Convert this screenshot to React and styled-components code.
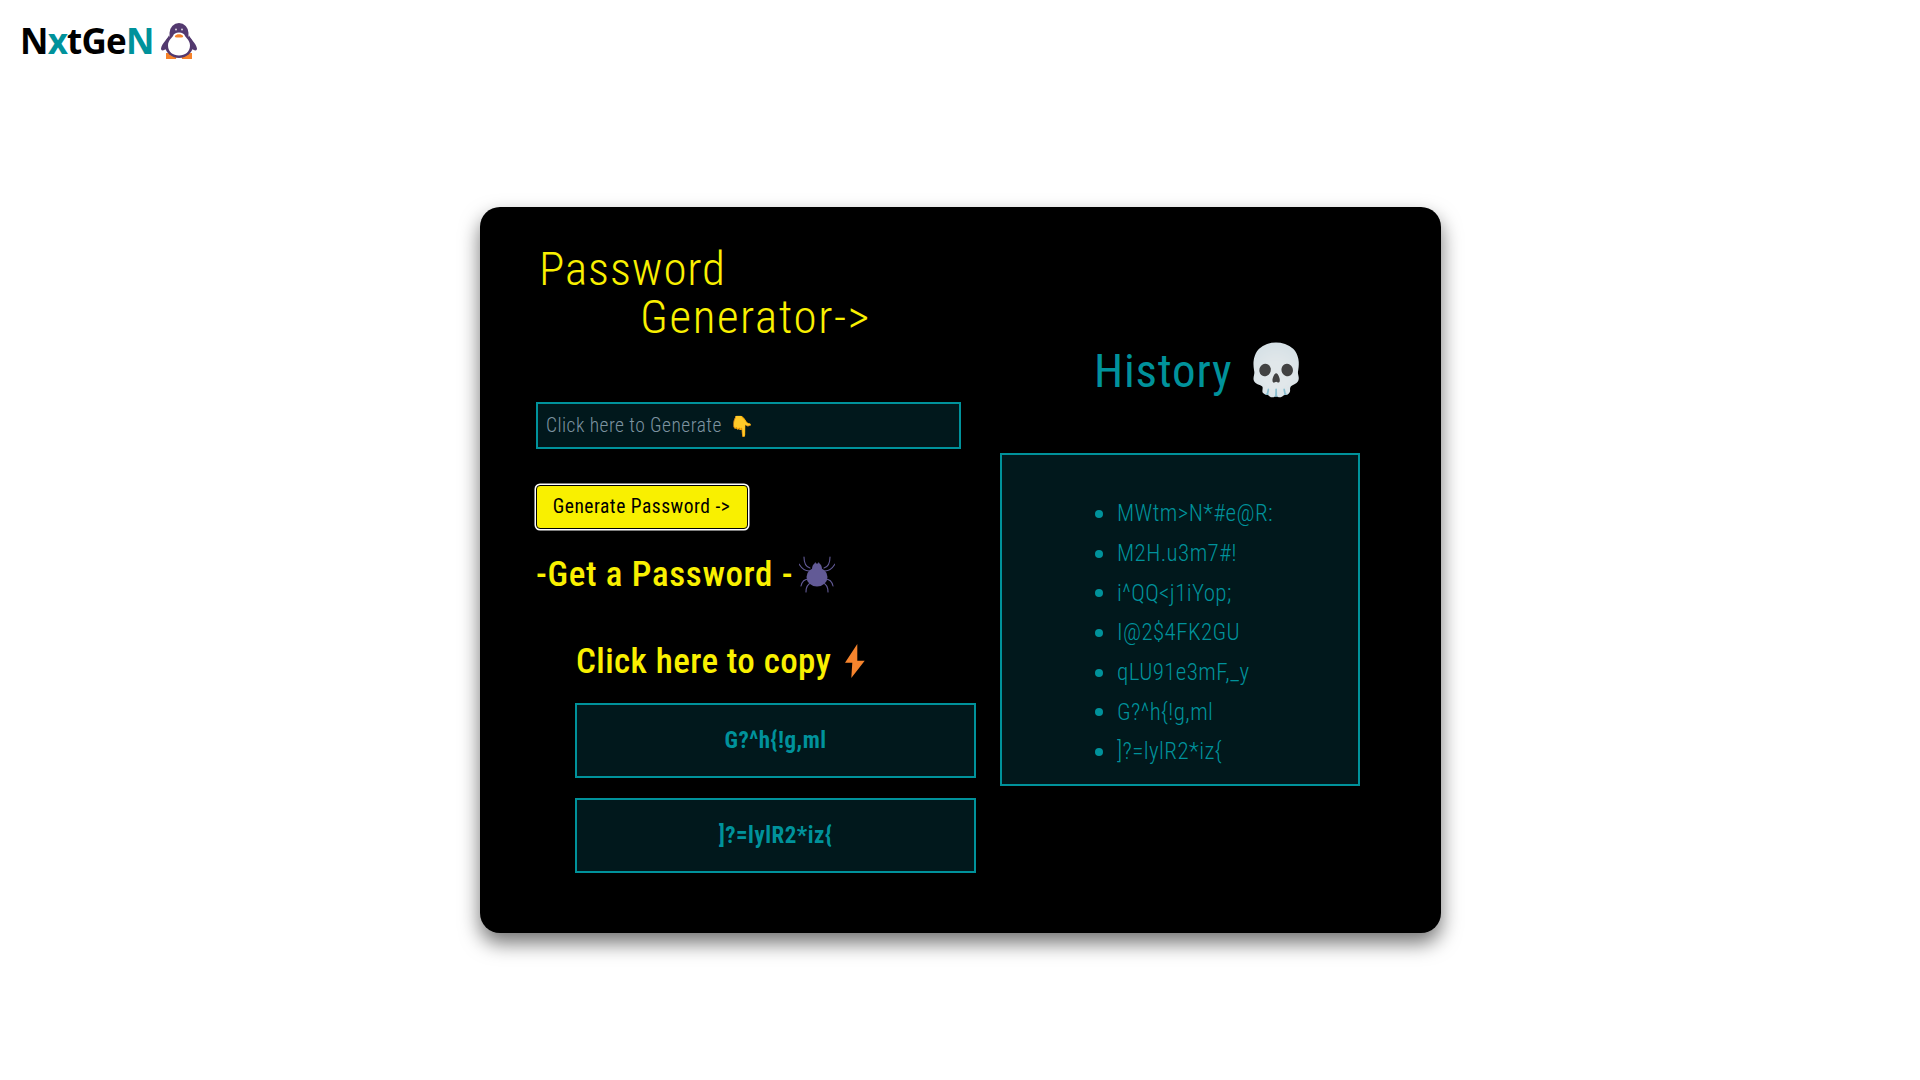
import React from "react";
import styled, { createGlobalStyle } from "styled-components";

const TEAL = "#00929b";
const DARK = "#01181c";
const YELLOW = "#f9f000";
const CONDENSED = `"Roboto Condensed", Roboto, "Liberation Sans", sans-serif`;
const EMOJI = `"Roboto Condensed", "Noto Color Emoji", sans-serif`;

const Global = createGlobalStyle`
  html, body { margin: 0; padding: 0; background: #fff; }
  * { box-sizing: border-box; }
`;

const Page = styled.div`
  display: flex;
  flex-direction: column;
  align-items: flex-start;
  width: 1920px;
  height: 1080px;
  overflow: hidden;
`;

const Header = styled.header`
  display: flex;
  align-items: center;
  gap: 7px;
  height: 82px;
  padding-left: 20px;
`;

const Logo = styled.h1`
  margin: 0;
  font-family: "Open Sans", sans-serif;
  font-size: 35px;
  font-weight: 700;
  line-height: 82px;
  letter-spacing: -0.8px;
  color: #000;
`;

const Accent = styled.span`
  color: ${TEAL};
`;

const Card = styled.main`
  display: grid;
  grid-template-columns: 466px 360px;
  width: 961px;
  height: 726px;
  margin: 125px 0 0 480px;
  padding-left: 54px;
  background: #000;
  border-radius: 20px;
  box-shadow: 0 10px 20px rgba(0, 0, 0, 0.55);
  font-family: ${CONDENSED};
`;

const LeftColumn = styled.section`
  display: flex;
  flex-direction: column;
  align-items: flex-start;
  padding-top: 38px;
`;

const Title = styled.h2`
  margin: 0 0 61px 5px;
  font-size: 47px;
  font-weight: 300;
  line-height: 48px;
  color: ${YELLOW};
`;

const TitleLine = styled.span`
  display: block;
  margin-left: ${(p) => p.$indent || 0}px;
  letter-spacing: ${(p) => p.$spacing}px;
`;

const Field = styled.div`
  display: flex;
  align-items: center;
  gap: 8px;
  width: 425px;
  height: 47px;
  margin-left: 2px;
  padding-left: 8px;
  background: ${DARK};
  border: 2px solid ${TEAL};
`;

const Placeholder = styled.span`
  font-size: 19.5px;
  font-weight: 300;
  letter-spacing: 0.45px;
  color: #7d93a0;
`;

const Hand = styled.span`
  font-family: ${EMOJI};
  font-size: 20px;
  line-height: 1;
`;

const GenerateButton = styled.button`
  width: 212px;
  height: 44px;
  margin: 35.5px 0 0 1.5px;
  padding: 0;
  background: ${YELLOW};
  border: 1px solid #000;
  border-radius: 4px;
  box-shadow: 0 0 0 1.5px #fff;
  font-family: ${CONDENSED};
  font-size: 19.5px;
  font-weight: 400;
  letter-spacing: 0.5px;
  color: #000;
`;

const Status = styled.div`
  display: flex;
  align-items: center;
  gap: 6px;
  height: 50px;
  margin: 20.5px 0 0 2px;
  font-size: 35px;
  font-weight: 500;
  letter-spacing: 0.65px;
  color: ${YELLOW};
`;

const Saved = styled.div`
  display: flex;
  flex-direction: column;
  gap: 20px;
  width: 401px;
  margin: 40px 0 0 41px;
`;

const CopyHeading = styled.div`
  display: flex;
  align-items: center;
  gap: 14px;
  height: 44px;
  margin: 0 0 0 1px;
  font-size: 35px;
  font-weight: 500;
  letter-spacing: 0.4px;
  color: ${YELLOW};
`;

const CopyBox = styled.div`
  display: flex;
  align-items: center;
  justify-content: center;
  height: 75px;
  background: ${DARK};
  border: 2px solid ${TEAL};
  font-size: 23px;
  font-weight: 700;
  letter-spacing: 0.5px;
  color: ${TEAL};
`;

const RightColumn = styled.section`
  display: flex;
  flex-direction: column;
  padding-top: 128px;
`;

const HistoryHeading = styled.h2`
  display: flex;
  align-items: center;
  gap: 13px;
  height: 70px;
  margin: 0 0 48px 94px;
  font-size: 47px;
  font-weight: 400;
  letter-spacing: 0.8px;
  white-space: nowrap;
  color: ${TEAL};
`;

const Skull = styled.span`
  font-family: ${EMOJI};
  font-size: 50px;
  line-height: 1;
`;

const HistoryBox = styled.ul`
  display: flex;
  flex-direction: column;
  width: 360px;
  height: 333px;
  margin: 0;
  padding: 39px 0 0 93px;
  list-style: none;
  background: ${DARK};
  border: 2px solid ${TEAL};
`;

const HistoryItem = styled.li`
  display: flex;
  align-items: center;
  gap: 14px;
  height: 39.7px;
  font-size: 23px;
  font-weight: 300;
  letter-spacing: 0.4px;
  color: ${TEAL};

  &::before {
    content: "";
    width: 8px;
    height: 8px;
    border-radius: 50%;
    background: ${TEAL};
  }
`;

const Penguin = () => (
  <svg width="36" height="36" viewBox="0 0 36 36" aria-hidden="true">
    <path d="M5 30h11l-1 6H5zM20 30h11v6H21z" fill="#f6822a" />
    <path d="M9 10C7 16 1 20 0 25.500 0 28.500 3 27.500 6 25.500zM27 10c2 6 8 10 9 15.500 0 3-3 2-6 0z" fill="#53396f" />
    <ellipse cx="18" cy="10" rx="9.500" ry="10" fill="#53396f" />
    <ellipse cx="18" cy="22.500" rx="14" ry="12.500" fill="#53396f" />
    <path d="M18 9.500c3 0 5.500 1.500 6 3.500.5 1.500 5 4 5 9.500 0 6.500-5 10-11 10s-11-3.500-11-10c0-5.500 4.500-8 5-9.500.5-2 3-3.500 6-3.500z" fill="#fff" />
    <circle cx="15" cy="6.500" r="1" fill="#d8d3df" />
    <circle cx="21" cy="6.500" r="1" fill="#d8d3df" />
    <path d="M14 13c1-2.200 7-2.200 8 0 .6 1.500-1.500 1.600-4 1.600s-4.600-.1-4-1.600z" fill="#f6822a" />
  </svg>
);

const Spider = () => (
  <svg width="36" height="37" viewBox="0 0 36 37" aria-hidden="true">
    <g fill="none" stroke="#625a96" strokeWidth="1.1" strokeLinecap="round">
      <path d="M11 12C7 11 5 7 5 1" />
      <path d="M25 12c4-1 6-5 6-11" />
      <path d="M10 15C6 15 3 13 0 8" />
      <path d="M26 15c4 0 7-2 10-7" />
      <path d="M10 23c-4 0-7 2-8 7" />
      <path d="M26 23c4 0 7 2 8 7" />
      <path d="M12 27c-3 1-5 4-5 9" />
      <path d="M24 27c3 1 5 4 5 9" />
    </g>
    <ellipse cx="18" cy="21" rx="10.500" ry="9.500" fill="#625a96" />
    <path d="M13 13c0-3 1.500-5 2.500-5.500l.8-1.500.7 1.500h2l.7-1.500.8 1.500c1 .5 2.500 2.500 2.500 5.500z" fill="#625a96" />
  </svg>
);

const Bolt = () => (
  <svg width="20" height="34" viewBox="0 0 20 34" aria-hidden="true">
    <polygon points="12.300,0 0,18.700 7.300,18.700 6.300,34 19.700,16.700 12.300,16.700" fill="#f6842d" />
  </svg>
);

const history = [
  "MWtm>N*#e@R:",
  "M2H.u3m7#!",
  "i^QQ<j1iYop;",
  "I@2$4FK2GU",
  "qLU91e3mF,_y",
  "G?^h{!g,ml",
  "]?=lylR2*iz{",
];

export default function App() {
  return (
    <Page>
      <Global />
      <Header>
        <Logo>
          N<Accent>x</Accent>tGe<Accent>N</Accent>
        </Logo>
        <Penguin />
      </Header>
      <Card>
        <LeftColumn>
          <Title>
            <TitleLine $spacing={0.9}>Password</TitleLine>
            <TitleLine $indent={101} $spacing={1.6}>Generator-&gt;</TitleLine>
          </Title>
          <Field>
            <Placeholder>Click here to Generate</Placeholder>
            <Hand>👇</Hand>
          </Field>
          <GenerateButton>Generate Password -&gt;</GenerateButton>
          <Status>
            -Get a Password - <Spider />
          </Status>
          <Saved>
            <CopyHeading>
              Click here to copy <Bolt />
            </CopyHeading>
            <CopyBox>G?^h{"{"}!g,ml</CopyBox>
            <CopyBox>]?=lylR2*iz{"{"}</CopyBox>
          </Saved>
        </LeftColumn>
        <RightColumn>
          <HistoryHeading>
            History <Skull>💀</Skull>
          </HistoryHeading>
          <HistoryBox>
            {history.map((item) => (
              <HistoryItem key={item}>{item}</HistoryItem>
            ))}
          </HistoryBox>
        </RightColumn>
      </Card>
    </Page>
  );
}
